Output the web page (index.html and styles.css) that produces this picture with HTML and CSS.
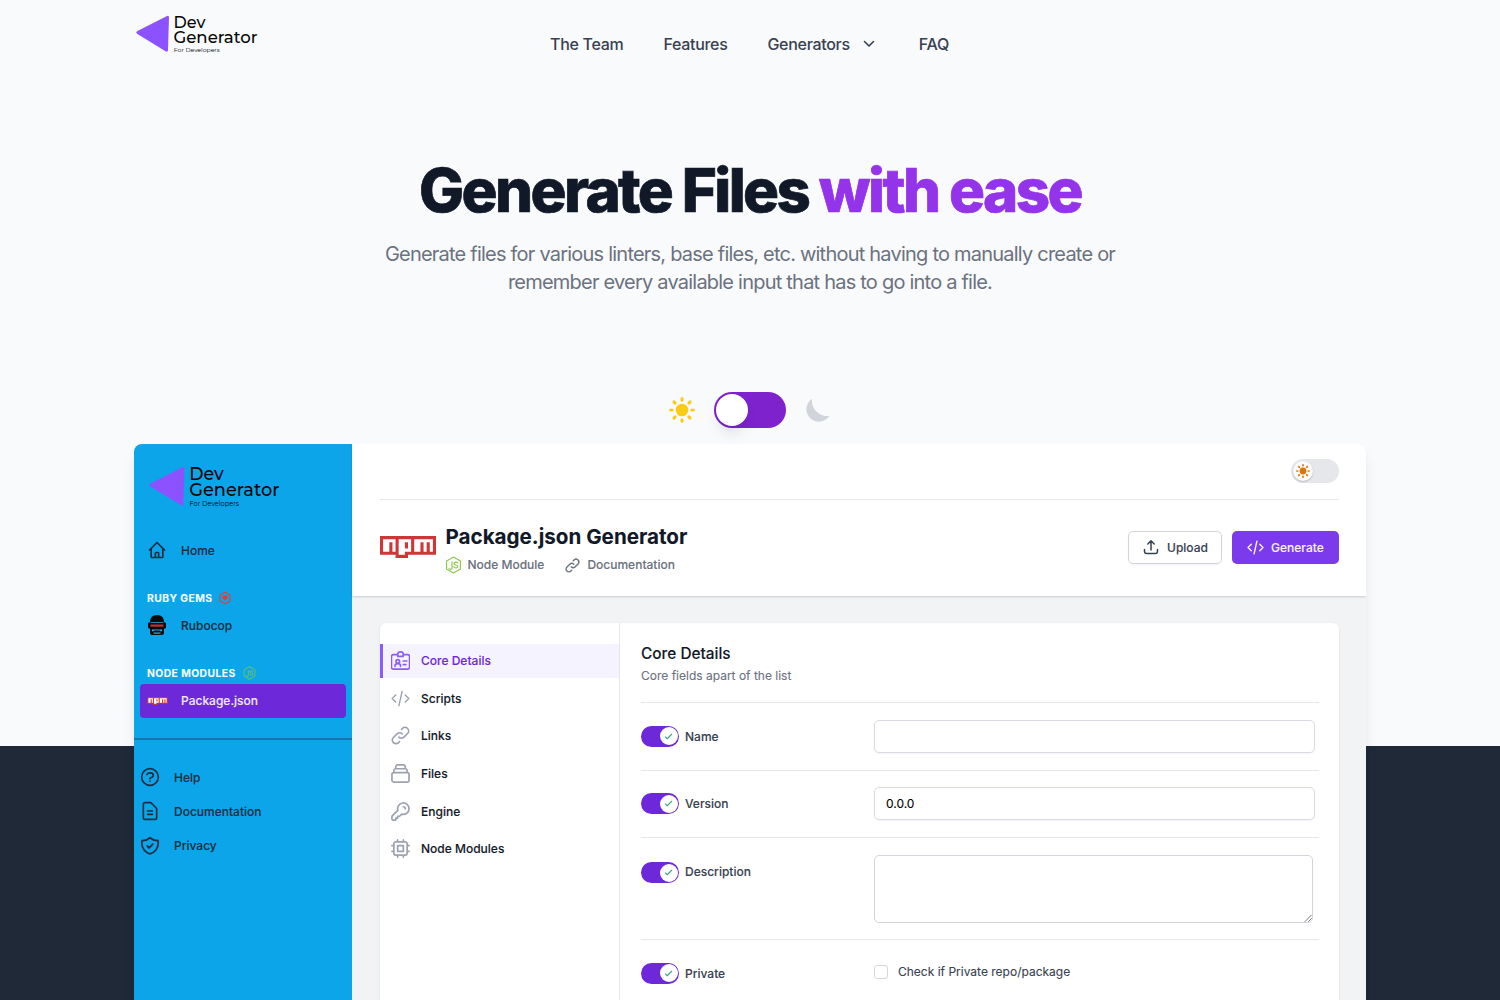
FILE: index.html
```html
<!DOCTYPE html>
<html lang="en">
<head>
<meta charset="utf-8">
<title>Dev Generator</title>
<link rel="stylesheet" href="styles.css">
</head>
<body>
<svg class="defs" aria-hidden="true">
  <symbol id="sun" viewBox="0 0 26 26">
    <circle cx="13" cy="13" r="6.300"/>
    <g id="rays"><ellipse cx="13" cy="2.400" rx="1.600" ry="2.400"/><ellipse cx="13" cy="23.600" rx="1.600" ry="2.400"/><ellipse cx="2.400" cy="13" rx="2.400" ry="1.600"/><ellipse cx="23.600" cy="13" rx="2.400" ry="1.600"/></g>
    <use href="#rays" transform="rotate(45 13 13)"/>
  </symbol>
  <symbol id="node" viewBox="0 0 24 26">
    <path d="M12 1.500 22 7.200v11.600L12 24.500 2 18.800V7.200Z"/>
    <path d="M9.800 8.500v8.500q0 2.500-2.200 2.200l-2-.9M18 10q-1-1.300-3-1.200-2.500.2-2.400 2.200.2 1.700 2.700 2 2.900.3 2.800 2.200-.2 2-2.800 2-2.500 0-3-1.900"/>
  </symbol>
  <symbol id="npm" viewBox="0 0 18 7">
    <path fill="#cb3837" d="M0 0h18v6H9v1H5V6H0Z"/>
    <path fill="#fff" d="M1 5h2V2h1v3h1V1H1ZM6 1v5h2V5h2V1ZM8 2h1v2H8ZM11 1v4h2V2h1v3h1V2h1v3h1V1Z"/>
  </symbol>
  <symbol id="link" viewBox="0 0 24 24"><path d="M13.828 10.172a4 4 0 00-5.656 0l-4 4a4 4 0 105.656 5.656l1.102-1.101m-.758-4.899a4 4 0 005.656 0l4-4a4 4 0 00-5.656-5.656l-1.100 1.100"/></symbol>
  <symbol id="code" viewBox="0 0 24 24"><path d="M6 7.500 1.500 12 6 16.500M18 7.500l4.500 4.500-4.500 4.500M14 3l-4 18"/></symbol>
  <symbol id="check" viewBox="0 0 10 10"><path d="M1.500 5.500 3.500 7.500 8.500 2.500"/></symbol>
</svg>

<div class="page">
  <header class="top">
    <a class="brand"><svg class="logo" viewBox="0 0 122 40">
      <path d="M1 18.300 30.500 3.300Q33 2 33 4.500L32 37Q31.800 39.600 29.500 38.200L1 20.700Q-.500 19.400 1 18.300Z"/>
      <text x="37.500" y="15" textLength="32" lengthAdjust="spacingAndGlyphs">Dev</text>
      <text x="37.500" y="30" textLength="84" lengthAdjust="spacingAndGlyphs">Generator</text>
      <text class="tag" x="37.800" y="39.300" textLength="46" lengthAdjust="spacingAndGlyphs">For Developers</text>
    </svg></a>
    <nav class="menu">
      <a>The Team</a><a>Features</a>
      <a class="drop">Generators <svg class="chev" viewBox="0 0 12 8"><path d="M1.500 1.500 6 6l4.500-4.500"/></svg></a>
      <a>FAQ</a>
    </nav>
  </header>

  <section class="hero">
    <h1>Generate Files <span>with ease</span></h1>
    <p>Generate files for various linters, base files, etc. without having to manually create or<br>remember every available input that has to go into a file.</p>
  </section>

  <div class="theme">
    <svg class="sun"><use href="#sun"/></svg>
    <div class="switch"><i></i></div>
    <svg class="moon" viewBox="0 0 26 26"><path d="M7 1.700A12.500 12.500 0 1 0 24.300 19 15.500 15.500 0 0 1 7 1.700Z"/></svg>
  </div>

  <main class="app">
    <aside class="side">
      <svg class="logo side-logo" viewBox="0 0 122 40">
        <path d="M1 18.300 30.500 3.300Q33 2 33 4.500L32 37Q31.800 39.600 29.500 38.200L1 20.700Q-.500 19.400 1 18.300Z"/>
        <text x="37.500" y="15" textLength="32" lengthAdjust="spacingAndGlyphs">Dev</text>
        <text x="37.500" y="30" textLength="84" lengthAdjust="spacingAndGlyphs">Generator</text>
        <text class="tag" x="37.800" y="39.300" textLength="46" lengthAdjust="spacingAndGlyphs">For Developers</text>
      </svg>
      <a class="item home"><svg class="ic" viewBox="0 0 24 24"><path d="M3 12l2-2m0 0l7-7 7 7M5 10v10a1 1 0 001 1h3m10-11l2 2m-2-2v10a1 1 0 01-1 1h-3m-6 0a1 1 0 001-1v-4a1 1 0 011-1h2a1 1 0 011 1v4a1 1 0 001 1m-6 0h6"/></svg>Home</a>
      <h4 class="gems">RUBY GEMS <svg class="ruby" viewBox="0 0 24 26"><path d="M12 1.500 22 7.200v11.600L12 24.500 2 18.800V7.200Z"/><path class="gem" d="M8.500 8h7l3 3.500L12 18.500 5.500 11.500Z"/></svg></h4>
      <a class="item cop"><svg class="cop-ic" viewBox="0 0 20 22"><path fill="#080b10" d="M3 8Q3 1 10 1t7 7l2 1v5l-2 1v4q0 2-2 2H5q-2 0-2-2v-4l-2-1V9Z"/><path fill="#c9302b" d="M3.500 10.500h13v2.200h-13z"/><path fill="#36a9e1" d="M3.500 8.200h13v.700h-13zM5 15.500h10v1.700h-2v-.700H7v.700H5zM6.500 18.500h7v1.200h-7z"/></svg>Rubocop</a>
      <h4 class="modules">NODE MODULES <svg class="node-s"><use href="#node"/></svg></h4>
      <a class="item active"><svg class="npm-s"><use href="#npm"/></svg>Package.json</a>
      <div class="support">
        <a class="item"><svg class="ic" viewBox="0 0 24 24"><path d="M8.228 9c.549-1.165 2.030-2 3.772-2 2.210 0 4 1.343 4 3 0 1.400-1.278 2.575-3.006 2.907-.542.104-.994.540-.994 1.093m0 3h.010M22 12a10 10 0 11-20 0 10 10 0 0120 0z"/></svg>Help</a>
        <a class="item"><svg class="ic" viewBox="0 0 24 24"><path d="M9 12h6m-6 4h6m2 6H6a2 2 0 01-2-2V4a2 2 0 012-2h6.586a1 1 0 01.707.293l6.414 6.414a1 1 0 01.293.707V20a2 2 0 01-2 2z"/></svg>Documentation</a>
        <a class="item"><svg class="ic" viewBox="1 1 22 22"><path d="M9 12l2 2 4-4m5.618-4.016A11.955 11.955 0 0112 2.944a11.955 11.955 0 01-8.618 3.040A12.020 12.020 0 003 9c0 5.591 3.824 10.290 9 11.622 5.176-1.332 9-6.030 9-11.622 0-1.042-.133-2.052-.382-3.016z"/></svg>Privacy</a>
      </div>
    </aside>

    <div class="work">
      <div class="head">
        <div class="bar"><div class="mini"><i><svg><use href="#sun"/></svg></i></div></div>
        <div class="title">
          <svg class="npm-l"><use href="#npm"/></svg>
          <div class="names">
            <h2>Package.json Generator</h2>
            <div class="meta"><svg class="node-m"><use href="#node"/></svg><span class="kind">Node Module</span><svg class="lk"><use href="#link"/></svg><span>Documentation</span></div>
          </div>
          <a class="btn upload"><svg viewBox="0 0 16 16"><path d="M8 11V2M4.800 5 8 1.800 11.200 5M1.500 10.500v1.700q0 2.300 2.300 2.300h8.400q2.300 0 2.300-2.300v-1.700"/></svg>Upload</a>
          <a class="btn generate"><svg><use href="#code"/></svg>Generate</a>
        </div>
      </div>

      <div class="card">
        <nav class="tabs">
          <a class="on"><svg viewBox="1.500 1 21 21"><path d="M9 5H4a2 2 0 00-2 2v12a2 2 0 002 2h16a2 2 0 002-2V7a2 2 0 00-2-2h-5M9 4.500Q9 2 12 2t3 2.500V7H9ZM6 18v-1q0-2 3-2t3 2v1M15 12h4M15 16h3"/><circle cx="9" cy="12.500" r="2"/></svg>Core Details</a>
          <a><svg><use href="#code"/></svg>Scripts</a>
          <a><svg viewBox="1.500 1.500 21 21"><path d="M13.828 10.172a4 4 0 00-5.656 0l-4 4a4 4 0 105.656 5.656l1.102-1.101m-.758-4.899a4 4 0 005.656 0l4-4a4 4 0 00-5.656-5.656l-1.100 1.100"/></svg>Links</a>
          <a><svg viewBox="2 2 20 20"><path d="M19 11H5m14 0a2 2 0 012 2v6a2 2 0 01-2 2H5a2 2 0 01-2-2v-6a2 2 0 012-2m14 0V9a2 2 0 00-2-2M5 11V9a2 2 0 012-2m0 0V5a2 2 0 012-2h6a2 2 0 012 2v2M7 7h10"/></svg>Files</a>
          <a><svg viewBox="2 2 20 20"><path d="M15 7a2 2 0 012 2m4 0a6 6 0 01-7.743 5.743L11 17H9v2H7v2H4a1 1 0 01-1-1v-2.586a1 1 0 01.293-.707l5.964-5.964A6 6 0 1121 9z"/></svg>Engine</a>
          <a><svg viewBox="2 2 20 20"><path d="M9 3v2m6-2v2M9 19v2m6-2v2M5 9H3m2 6H3m18-6h-2m2 6h-2M7 19h10a2 2 0 002-2V7a2 2 0 00-2-2H7a2 2 0 00-2 2v10a2 2 0 002 2zM9 9h6v6H9V9z"/></svg>Node Modules</a>
        </nav>
        <div class="form">
          <h3>Core Details</h3>
          <p class="sub">Core fields apart of the list</p>
          <div class="row"><div class="tog"><i><svg><use href="#check"/></svg></i></div><label>Name</label><div class="input"></div></div>
          <div class="row"><div class="tog"><i><svg><use href="#check"/></svg></i></div><label>Version</label><div class="input">0.0.0</div></div>
          <div class="row tall"><div class="tog"><i><svg><use href="#check"/></svg></i></div><label>Description</label><div class="area"><svg viewBox="0 0 8 8"><path d="M1 7.500 7.500 1M4.500 7.500l3-3"/></svg></div></div>
          <div class="row"><div class="tog"><i><svg><use href="#check"/></svg></i></div><label>Private</label><div class="box"></div><span class="hint">Check if Private repo/package</span></div>
        </div>
      </div>
    </div>
  </main>
</div>
</body>
</html>
```
FILE: styles.css
```css
* { box-sizing: border-box; }
body { margin: 0; font-family: Inter, sans-serif; color: #1f2937; }
h1, h2, h3, h4, p { margin: 0; }
svg { display: block; flex: none; fill: none; stroke: currentColor; stroke-width: 2; stroke-linecap: round; stroke-linejoin: round; }
.defs { width: 0; height: 0; position: absolute; }
.page { height: 1000px; overflow: hidden; background: linear-gradient(#f9fafb 0 746px, #1f2937 746px); display: flex; flex-direction: column; align-items: center; }
.page > * { flex: none; }

.top { width: 1232px; height: 88px; display: grid; grid-template-columns: 416px 1fr; }
.brand { padding: 13px 0 0 2px; }
.logo { width: 122px; height: 40px; stroke: none; fill: #050505; font: 500 16.500px Montserrat, Inter, sans-serif; overflow: visible; -webkit-text-stroke: 0; }
.logo path { fill: #8c52ff; }
.logo .tag { font-size: 6.200px; font-weight: 400; }
.menu { display: flex; align-items: center; gap: 40px; font-size: 16px; font-weight: 500; letter-spacing: -.3px; color: #374151; line-height: 24px; }
.drop { display: flex; align-items: center; }
.chev { width: 12px; height: 8px; margin: 0 4px 0 13px; stroke-width: 1.600; }

.hero { text-align: center; padding-top: 72px; height: 304px; }
h1 { font-size: 60px; line-height: 60px; font-weight: 800; letter-spacing: -2.600px; color: #111827; -webkit-text-stroke: .7px; }
h1 span { color: #9333ea; }
.hero p { margin-top: 20px; font-size: 20px; line-height: 28px; letter-spacing: -.78px; color: #6b7280; }

.theme { display: flex; align-items: center; gap: 19px; height: 36px; margin-bottom: 16px; }
.sun { width: 26px; height: 26px; fill: #facc15; stroke: none; }
.moon { width: 26px; height: 26px; fill: #d1d5db; stroke: none; }
.switch { width: 72px; height: 36px; border-radius: 18px; background: #7e22ce; padding: 2px; }
.switch i { display: block; width: 32px; height: 32px; border-radius: 50%; background: #fff; box-shadow: 0 10px 15px -3px #0000001a, 0 4px 6px -2px #0000000d; }

.app { width: 1232px; height: 700px; display: flex; border-radius: 8px; overflow: hidden; background: #f2f3f5; box-shadow: 0 10px 15px -3px #0000001a, 0 4px 6px -2px #0000000d; -webkit-text-stroke: .1px; }
.side { width: 218px; background: #0ca5ea; font-size: 12px; font-weight: 500; color: #1f2f40; }
.side-logo { width: 131px; height: 43px; margin: 20px 0 0 15px; }
.item { display: flex; align-items: center; height: 34px; }
.ic { width: 20px; height: 20px; }
.home { margin-top: 26px; padding-left: 13px; gap: 14px; }
h4 { display: flex; align-items: center; height: 16px; padding-left: 13px; font-size: 10.300px; font-weight: 700; letter-spacing: .45px; color: #f5fbff; gap: 7px; }
.gems { margin-top: 23px; }
.ruby { width: 12px; height: 14px; color: #cf493f; stroke-width: 2.400; }
.gem { fill: #e23d34; stroke: none; }
.cop { margin-top: 2px; padding-left: 13px; gap: 14px; }
.cop-ic { width: 20px; height: 22px; stroke: none; }
.modules { margin-top: 23px; }
.node-s { width: 13px; height: 14px; color: #63c06f; stroke-width: 1.900; }
.active { margin: 3px 6px 0; padding: 0 0 1px 7px; gap: 13px; background: #6d28d9; border-radius: 4px; color: #f0eaff; }
.npm-s { width: 21px; height: 8px; stroke: none; }
.support { margin-top: 20px; border-top: 2px solid #1478ae; padding: 20px 0 0 6px; }
.support .item { gap: 14px; height: 34.300px; }

.work { flex: 1; }
.head { height: 152px; background: #fff; padding: 0 27px 0 28px; box-shadow: 0 1px 2px #0000002b; }
.bar { height: 56px; border-bottom: 1px solid #e5e7eb; display: flex; justify-content: flex-end; align-items: center; }
.mini { width: 48px; height: 24px; border-radius: 12px; background: #e5e7eb; padding: 2px; margin-top: -1px; }
.mini i { display: flex; align-items: center; justify-content: center; width: 20px; height: 20px; border-radius: 50%; background: #f9fafb; box-shadow: 0 1px 2px #0003; }
.mini svg { width: 14px; height: 14px; fill: #d97706; stroke: none; }
.title { display: flex; align-items: center; height: 96px; }
.npm-l { width: 56px; height: 22px; stroke: none; margin-top: -2px; }
.names { margin: 2px 0 0 9.500px; flex: 1; }
h2 { font-size: 20.600px; line-height: 26px; font-weight: 700; color: #111827; }
.meta { display: flex; align-items: center; margin: 6px 0 0 -1px; font-size: 12px; line-height: 18px; font-weight: 500; color: #6b7280; }
.node-m { width: 17px; height: 18px; color: #8cc84b; stroke-width: 1.700; }
.kind { margin: 0 20px 0 6px; }
.lk { width: 17px; height: 17px; margin-right: 6px; }
.btn { display: flex; align-items: center; height: 33px; margin-top: -2px; border-radius: 5px; font-size: 12px; font-weight: 500; }
.upload { width: 94px; border: 1px solid #d1d5db; padding-left: 14px; gap: 8px; color: #374151; margin-right: 10px; box-shadow: 0 1px 2px #0000000d; }
.upload svg { width: 16px; height: 16px; stroke-width: 1.500; }
.generate { width: 107px; background: #7c3aed; color: #f7f2ff; padding-left: 15px; gap: 7px; }
.generate svg { width: 17px; height: 17px; }

.card { margin: 27px 27px 0 28px; height: 600px; background: #fff; border-radius: 6px; box-shadow: 0 1px 3px #0000001a; display: flex; }
.tabs { width: 240px; border-right: 1px solid #e5e7eb; padding-top: 20.500px; display: flex; flex-direction: column; gap: 3.700px; }
.tabs a { display: flex; align-items: center; height: 34px; padding-left: 11px; gap: 11px; font-size: 12px; font-weight: 500; color: #111827; }
.tabs svg { width: 19px; height: 19px; color: #9ca3af; stroke-width: 1.800; }
.tabs .on { background: #f5f3ff; border-left: 3px solid #8b5cf6; padding-left: 8px; color: #6d28d9; }
.tabs .on svg { color: #8b5cf6; }
.form { flex: 1; padding: 20px 20px 0 21px; }
h3 { font-size: 15.400px; line-height: 21px; font-weight: 500; color: #111827; }
.sub { font-size: 12px; line-height: 18px; color: #6b7280; margin: 3px 0 17px; }
.row { height: 67.500px; border-top: 1px solid #e5e7eb; display: flex; align-items: center; font-size: 12px; }
.tog { width: 38px; height: 21px; border-radius: 11px; background: #6d28d9; padding: 1.500px; display: flex; justify-content: flex-end; }
.tog i { width: 18px; height: 18px; background: #fff; border-radius: 50%; display: flex; align-items: center; justify-content: center; }
.tog svg { width: 9px; height: 9px; color: #3fa67e; stroke-width: 1.200; }
label { width: 189px; margin-left: 6px; font-weight: 500; color: #374151; }
.input { width: 441px; height: 33px; border: 1px solid #d9dbe2; border-radius: 5px; padding: 7px 11px; line-height: 17px; box-shadow: 0 1px 2px #0000000d; color: #000; }
.tall { height: 102px; align-items: flex-start; padding-top: 17px; }
.tall .tog, .tall label { margin-top: 7px; }
.tall label { line-height: 20px; }
.area { width: 439px; height: 68px; border: 1px solid #d1d5db; border-radius: 5px; display: flex; align-items: flex-end; justify-content: flex-end; }
.area svg { width: 8px; height: 8px; stroke: #777; stroke-width: 1; }
.box { width: 14px; height: 14px; border: 1px solid #d5d7de; border-radius: 3px; margin-top: -3px; }
.hint { margin: -3px 0 0 10px; color: #374151; }
```
